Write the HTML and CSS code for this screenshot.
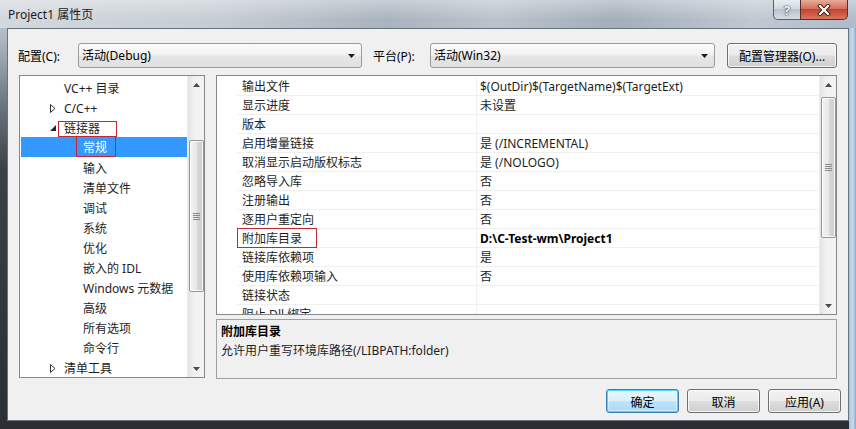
FILE: index.html
```html
<!DOCTYPE html>
<html lang="zh-CN">
<head>
<meta charset="utf-8">
<title>Project1 属性页</title>
<link rel="stylesheet" href="styles.css">
</head>
<body>
<div class="window">
  <div class="titlebar">
    <span class="title">Project1 属性页</span>
    <div class="caption">
      <span class="cap cap-help">?</span>
      <span class="cap cap-close">
        <svg width="14" height="12" viewBox="0 0 14 12"><path d="M3 2 L11 10 M11 2 L3 10" stroke="#3a1d18" stroke-width="4" stroke-linecap="square"/><path d="M3 2 L11 10 M11 2 L3 10" stroke="#ffffff" stroke-width="2.2" stroke-linecap="square"/></svg>
      </span>
    </div>
  </div>
  <div class="client">
    <div class="toolbar">
      <span class="lbl lbl-config">配置(C):</span>
      <div class="combo combo-config"><span class="combo-text">活动(Debug)</span><svg class="drop" width="7" height="4" viewBox="0 0 7 4"><path d="M0 0 H7 L3.5 4 Z" fill="#1a1a1a"/></svg></div>
      <span class="lbl lbl-platform">平台(P):</span>
      <div class="combo combo-platform"><span class="combo-text">活动(Win32)</span><svg class="drop" width="7" height="4" viewBox="0 0 7 4"><path d="M0 0 H7 L3.5 4 Z" fill="#1a1a1a"/></svg></div>
      <button class="btn btn-mgr">配置管理器(O)...</button>
    </div>
    <div class="main">
      <div class="tree">
        <div class="tree-list">
          <div class="trow lvl1"><span class="tog"></span>VC++ 目录</div>
          <div class="trow lvl1"><span class="tog"><svg width="6" height="9" viewBox="0 0 6 9"><path d="M0.5 0.5 L5 4.5 L0.5 8.5 Z" fill="none" stroke="#333" stroke-width="1"/></svg></span>C/C++</div>
          <div class="trow lvl1"><span class="tog"><svg width="7" height="7" viewBox="0 0 7 7"><path d="M6 0 L6 6 L0 6 Z" fill="#262626"/></svg></span><span class="redbox rb-linker">链接器</span></div>
          <div class="trow lvl2 selected"><span class="redbox rb-general">常规</span></div>
          <div class="trow lvl2">输入</div>
          <div class="trow lvl2">清单文件</div>
          <div class="trow lvl2">调试</div>
          <div class="trow lvl2">系统</div>
          <div class="trow lvl2">优化</div>
          <div class="trow lvl2">嵌入的 IDL</div>
          <div class="trow lvl2">Windows 元数据</div>
          <div class="trow lvl2">高级</div>
          <div class="trow lvl2">所有选项</div>
          <div class="trow lvl2">命令行</div>
          <div class="trow lvl1"><span class="tog"><svg width="6" height="9" viewBox="0 0 6 9"><path d="M0.5 0.5 L5 4.5 L0.5 8.5 Z" fill="none" stroke="#333" stroke-width="1"/></svg></span>清单工具</div>
        </div>
        <div class="vscroll">
          <div class="sb-btn"><svg width="7" height="4" viewBox="0 0 7 4"><path d="M0 4 H7 L3.5 0 Z" fill="#4a4a4a"/></svg></div>
          <div class="sb-track">
            <div class="sb-thumb thumb-tree"><span class="grip"></span></div>
          </div>
          <div class="sb-btn"><svg width="7" height="4" viewBox="0 0 7 4"><path d="M0 0 H7 L3.5 4 Z" fill="#4a4a4a"/></svg></div>
        </div>
      </div>
      <div class="rightcol">
        <div class="grid">
          <div class="grid-rows">
            <div class="grow"><span class="gut"></span><span class="gname">输出文件</span><span class="gval">$(OutDir)$(TargetName)$(TargetExt)</span></div>
            <div class="grow"><span class="gut"></span><span class="gname">显示进度</span><span class="gval">未设置</span></div>
            <div class="grow"><span class="gut"></span><span class="gname">版本</span><span class="gval"></span></div>
            <div class="grow"><span class="gut"></span><span class="gname">启用增量链接</span><span class="gval">是 (/INCREMENTAL)</span></div>
            <div class="grow"><span class="gut"></span><span class="gname">取消显示启动版权标志</span><span class="gval">是 (/NOLOGO)</span></div>
            <div class="grow"><span class="gut"></span><span class="gname">忽略导入库</span><span class="gval">否</span></div>
            <div class="grow"><span class="gut"></span><span class="gname">注册输出</span><span class="gval">否</span></div>
            <div class="grow"><span class="gut"></span><span class="gname">逐用户重定向</span><span class="gval">否</span></div>
            <div class="grow"><span class="gut"></span><span class="gname gname-box"><span class="redbox-cell">附加库目录</span></span><span class="gval bold">D:\C-Test-wm\Project1</span></div>
            <div class="grow"><span class="gut"></span><span class="gname">链接库依赖项</span><span class="gval">是</span></div>
            <div class="grow"><span class="gut"></span><span class="gname">使用库依赖项输入</span><span class="gval">否</span></div>
            <div class="grow"><span class="gut"></span><span class="gname">链接状态</span><span class="gval"></span></div>
            <div class="grow"><span class="gut"></span><span class="gname">阻止 Dll 绑定</span><span class="gval"></span></div>
          </div>
          <div class="vscroll">
            <div class="sb-btn"><svg width="7" height="4" viewBox="0 0 7 4"><path d="M0 4 H7 L3.5 0 Z" fill="#4a4a4a"/></svg></div>
            <div class="sb-track">
              <div class="sb-thumb thumb-grid"><span class="grip"></span></div>
            </div>
            <div class="sb-btn"><svg width="7" height="4" viewBox="0 0 7 4"><path d="M0 0 H7 L3.5 4 Z" fill="#4a4a4a"/></svg></div>
          </div>
        </div>
        <div class="desc">
          <div class="desc-title">附加库目录</div>
          <div class="desc-text">允许用户重写环境库路径(/LIBPATH:folder)</div>
        </div>
      </div>
    </div>
    <div class="buttons">
      <button class="btn btn-default">确定</button>
      <button class="btn">取消</button>
      <button class="btn">应用(A)</button>
    </div>
  </div>
</div>
</body>
</html>
```
FILE: styles.css
```css
* { box-sizing: border-box; }
html, body { margin: 0; padding: 0; }
body {
  width: 856px;
  height: 429px;
  overflow: hidden;
  font-family: "Noto Sans", "Noto Sans CJK SC", sans-serif;
  font-size: 12px;
  color: #000;
}
.window {
  width: 856px;
  height: 429px;
  display: flex;
  flex-direction: column;
  background:
    linear-gradient(90deg, rgba(0,0,0,0) 0, rgba(0,0,0,0) 849px, #a9c3de 849px, #c7dbef 853px, #8aa6c4 856px),
    linear-gradient(180deg, #c9d0d7 0, #aeb7c0 40px, #6f7982 100px, #3b4148 170px, #2b2f34 100%);
}
.titlebar {
  height: 28px;
  display: flex;
  justify-content: space-between;
  align-items: flex-start;
  padding-left: 8px;
  background:
    linear-gradient(180deg, rgba(255,255,255,0.35), rgba(255,255,255,0) 70%),
    linear-gradient(90deg, #d2d8de 0%, #c6cdd4 25%, #aab4be 45%, #bac3cc 58%, #a3aeb9 72%, #c0c9d2 88%, #aebbc8 100%);
}
.title {
  line-height: 29px;
  font-size: 12px;
  color: #1b1b1b;
}
.caption {
  display: flex;
  margin-right: 8px;
}
.cap {
  height: 20px;
  display: flex;
  align-items: center;
  justify-content: center;
}
.cap-help {
  width: 27px;
  border: 1px solid #56626f;
  border-top: none;
  border-right: none;
  border-radius: 0 0 0 5px;
  background: linear-gradient(180deg, #e9eef3 0%, #d2d9e0 45%, #b9c3cd 50%, #d6dde4 100%);
  color: #f4f6f8;
  font-weight: bold;
  font-size: 13px;
  text-shadow: 0 0 1px #333, 0 0 2px #444;
}
.cap-close {
  width: 48px;
  border: 1px solid #54302b;
  border-top: none;
  border-radius: 0 0 5px 0;
  background: linear-gradient(180deg, #e8ab9b 0%, #d66f5b 45%, #c4432d 50%, #d9755d 100%);
}
.client {
  margin: 0 7px;
  height: 393px;
  border: 1px solid #66727e;
  background: #f0f0f0;
  display: flex;
  flex-direction: column;
}
.toolbar {
  display: flex;
  align-items: center;
  height: 25px;
  margin: 14px 0 0 10px;
}
.lbl { line-height: 25px; padding-top: 1px; white-space: nowrap; }
.lbl-config { width: 60px; }
.lbl-platform { width: 57px; margin-left: 11px; }
.combo {
  height: 25px;
  border: 1px solid #9a9a9a;
  border-radius: 3px;
  background: linear-gradient(180deg, #fbfbfb 0%, #f1f1f1 48%, #e6e6e6 52%, #e0e0e0 100%);
  display: flex;
  align-items: center;
  justify-content: space-between;
  padding: 1px 6px 0 3px;
}
.combo-config { width: 284px; }
.combo-platform { width: 285px; }
.combo-text { line-height: 22px; }
.btn {
  font-family: inherit;
  font-size: 12px;
  color: #000;
  height: 24px;
  width: 73px;
  padding: 1px 0 0 0;
  border: 1px solid #707070;
  border-radius: 3px;
  background: linear-gradient(180deg, #f2f2f2 0%, #ebebeb 48%, #dddddd 52%, #cfcfcf 100%);
  box-shadow: inset 0 0 0 1px rgba(255,255,255,0.75);
}
.btn-mgr {
  width: 110px;
  height: 25px;
  margin-left: 12px;
}
.btn-default {
  border-color: #3c7fb1;
  background: linear-gradient(180deg, #eaf6fd 0%, #d9f0fc 48%, #bee6fd 52%, #a7d9f5 100%);
  box-shadow: inset 0 0 0 1px #48d7fb, inset 0 0 0 2px rgba(255,255,255,0.4);
}
.main {
  display: flex;
  gap: 11px;
  height: 304px;
  margin: 7px 11px 0 11px;
}
.tree {
  width: 186px;
  height: 303px;
  border: 1px solid #828790;
  background: #fff;
  display: flex;
  padding-left: 1px;
}
.tree-list {
  width: 166px;
  overflow: hidden;
  padding-top: 1px;
}
.trow {
  height: 20px;
  line-height: 17px;
  padding-top: 3px;
  white-space: nowrap;
  display: flex;
  align-items: center;
  color: #1e1e1e;
}
.trow.lvl1 { padding-left: 27px; }
.trow.lvl2 { padding-left: 62px; }
.trow.selected { background: #3399ff; color: #fff; }
.tog {
  width: 16px;
  height: 17px;
  display: flex;
  align-items: center;
  padding-left: 2px;
  margin-top: -1px;
}
.tog svg { display: block; }
.redbox {
  display: inline-block;
  border: 1px solid #c4262e;
}
.rb-linker {
  height: 16px;
  line-height: 14px;
  margin-left: -6px;
  padding: 0 16px 0 5px;
}
.rb-general {
  height: 21px;
  line-height: 21px;
  margin-left: -7px;
  margin-top: -4px;
  padding: 0 8px 0 6px;
}
.vscroll {
  width: 17px;
  display: flex;
  flex-direction: column;
  background: linear-gradient(90deg, #e3e3e3 0%, #f2f2f2 40%, #f2f2f2 100%);
  border-left: 1px solid #ededed;
}
.sb-btn {
  height: 17px;
  display: flex;
  align-items: center;
  justify-content: center;
}
.sb-btn svg { display: block; }
.sb-track {
  flex: 1;
  display: flex;
  flex-direction: column;
  align-items: center;
}
.sb-thumb {
  width: 15px;
  border: 1px solid #979797;
  border-radius: 2px;
  background: linear-gradient(90deg, #f4f4f4 0%, #e8e8e8 50%, #d8d8d8 51%, #cfcfcf 100%);
  box-shadow: inset 0 0 0 1px rgba(255,255,255,0.8);
  display: flex;
  align-items: center;
  justify-content: center;
}
.thumb-tree { margin-top: 47px; height: 152px; }
.thumb-grid { margin-top: 4px; height: 141px; }
.grip {
  width: 7px;
  height: 7px;
  background: repeating-linear-gradient(180deg, #8a8a8a 0, #8a8a8a 1px, transparent 1px, transparent 2px);
}
.rightcol {
  width: 621px;
  display: flex;
  flex-direction: column;
  gap: 4px;
}
.grid {
  height: 240px;
  border: 1px solid #828790;
  background: #fff;
  display: flex;
}
.grid-rows {
  width: 602px;
  overflow: hidden;
  padding-top: 1px;
}
.grow {
  display: flex;
  height: 19px;
  color: #1e1e1e;
}
.gut { width: 20px; flex: none; }
.gname {
  width: 240px;
  flex: none;
  border-bottom: 1px solid #f0f0f0;
  border-right: 1px solid #f0f0f0;
  padding: 2px 0 0 5px;
  line-height: 16px;
  white-space: nowrap;
}
.gname-box { padding: 0; }
.redbox-cell {
  display: block;
  width: 80px;
  height: 20px;
  margin: -1px 0 -1px 0;
  border: 1px solid #c4262e;
  padding: 2px 0 0 4px;
  line-height: 16px;
}
.gval {
  flex: 1;
  border-bottom: 1px solid #f0f0f0;
  padding: 2px 0 0 3px;
  line-height: 16px;
  white-space: nowrap;
}
.gval.bold { font-weight: bold; color: #000; }
.desc {
  height: 60px;
  border: 1px solid #a0a0a0;
  background: #f0f0f0;
  padding: 2px 4px 0 4px;
  color: #1e1e1e;
}
.desc-title { line-height: 19px; font-weight: bold; color: #000; }
.desc-text { line-height: 19px; }
.buttons {
  display: flex;
  justify-content: flex-end;
  gap: 8px;
  margin: 10px 7px 0 0;
}
```
